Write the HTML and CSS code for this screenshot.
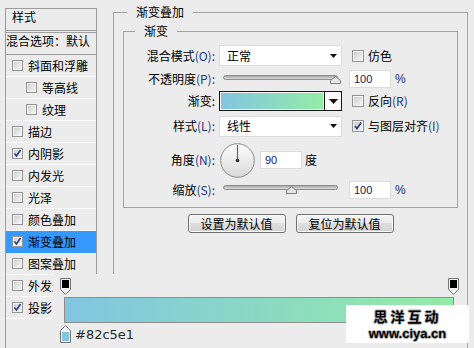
FILE: index.html
```html
<!DOCTYPE html>
<html lang="zh-CN">
<head>
<meta charset="utf-8">
<title>渐变叠加</title>
<link rel="stylesheet" href="styles.css">
</head>
<body>
<div class="page">
  <aside class="styles-list">
    <div class="list-head">样式</div>
    <div class="list-blend">混合选项：默认</div>
    <div class="item"><span class="cb"></span>斜面和浮雕</div>
    <div class="item sub"><span class="cb"></span>等高线</div>
    <div class="item sub"><span class="cb"></span>纹理</div>
    <div class="item"><span class="cb"></span>描边</div>
    <div class="item"><span class="cb checked"><svg width="9" height="9" viewBox="0 0 9 9"><path d="M1.5 4.5l2 2.5l4-6" fill="none" stroke="#2a3c8e" stroke-width="1.6"/></svg></span>内阴影</div>
    <div class="item"><span class="cb"></span>内发光</div>
    <div class="item"><span class="cb"></span>光泽</div>
    <div class="item"><span class="cb"></span>颜色叠加</div>
    <div class="item selected"><span class="cb checked"><svg width="9" height="9" viewBox="0 0 9 9"><path d="M1.5 4.5l2 2.5l4-6" fill="none" stroke="#2a3c8e" stroke-width="1.6"/></svg></span>渐变叠加</div>
    <div class="item"><span class="cb"></span>图案叠加</div>
    <div class="item"><span class="cb"></span>外发光</div>
    <div class="item"><span class="cb checked"><svg width="9" height="9" viewBox="0 0 9 9"><path d="M1.5 4.5l2 2.5l4-6" fill="none" stroke="#2a3c8e" stroke-width="1.6"/></svg></span>投影</div>
  </aside>

  <main class="group outer">
    <div class="group-title outer-title">渐变叠加</div>
    <section class="group inner">
      <div class="group-title inner-title">渐变</div>

      <div class="row r1">
        <div class="lbl">混合模式<span class="key">(O):</span></div>
        <div class="ctrl select"><span>正常</span><svg width="7" height="4" viewBox="0 0 7 4"><path d="M0 0h7l-3.5 4z" fill="#111"/></svg></div>
        <div class="side"><label class="check"><span class="cbox"></span>仿色</label></div>
      </div>

      <div class="row r2">
        <div class="lbl">不透明度<span class="key">(P):</span></div>
        <div class="ctrl slider"><div class="track"></div><svg class="thumb" style="left:107px" width="11" height="8" viewBox="0 0 11 8"><path d="M0.5 7.5v-3l5-4l5 4v3z" fill="#e6e6e6" stroke="#7d7d7d"/></svg></div>
        <div class="side"><div class="num">100</div><span class="pct">%</span></div>
      </div>

      <div class="row r3">
        <div class="lbl">渐变:</div>
        <div class="ctrl gradpick"><div class="swatch"><div class="swatch-fill"></div></div><div class="gbtn"><svg width="9" height="5" viewBox="0 0 9 5"><path d="M0 0h9l-4.5 5z" fill="#111"/></svg></div></div>
        <div class="side"><label class="check"><span class="cbox"></span>反向<span class="key">(R)</span></label></div>
      </div>

      <div class="row r4">
        <div class="lbl">样式<span class="key">(L):</span></div>
        <div class="ctrl select"><span>线性</span><svg width="7" height="4" viewBox="0 0 7 4"><path d="M0 0h7l-3.5 4z" fill="#111"/></svg></div>
        <div class="side"><label class="check"><span class="cbox"><svg width="10" height="10" viewBox="0 0 10 10"><path d="M2 5l2 2.6l4.2-6" fill="none" stroke="#2a3c8e" stroke-width="1.7"/></svg></span>与图层对齐<span class="key">(I)</span></label></div>
      </div>

      <div class="row r5">
        <div class="lbl">角度<span class="key">(N):</span></div>
        <div class="ctrl angle">
          <svg class="dial" width="35" height="35" viewBox="0 0 35 35">
            <defs><linearGradient id="dg" x1="0" y1="0" x2="0" y2="1"><stop offset="0" stop-color="#fdfdfd"/><stop offset="1" stop-color="#d9d9d9"/></linearGradient></defs>
            <circle cx="17.5" cy="17.5" r="16.8" fill="url(#dg)" stroke="#8a8a8a"/>
            <line x1="17.5" y1="2" x2="17.5" y2="17.5" stroke="#666" stroke-width="1.2"/>
            <circle cx="17.5" cy="17.5" r="1.8" fill="#333"/>
          </svg>
          <div class="num">90</div><span class="deg">度</span>
        </div>
      </div>

      <div class="row r6">
        <div class="lbl">缩放<span class="key">(S):</span></div>
        <div class="ctrl slider"><div class="track"></div><svg class="thumb" style="left:63px" width="11" height="8" viewBox="0 0 11 8"><path d="M0.5 7.5v-3l5-4l5 4v3z" fill="#e6e6e6" stroke="#7d7d7d"/></svg></div>
        <div class="side"><div class="num">100</div><span class="pct">%</span></div>
      </div>
    </section>

    <div class="buttons">
      <button class="btn">设置为默认值</button>
      <button class="btn">复位为默认值</button>
    </div>
  </main>
</div>

<div class="grad-editor">
  <div class="stops">
    <svg width="11" height="17" viewBox="0 0 11 17"><path d="M0.5 0.5h10v11l-5 5l-5-5z" fill="#f2f2f2" stroke="#777"/><rect x="2" y="2" width="7" height="8" fill="#000"/></svg>
    <svg width="11" height="17" viewBox="0 0 11 17"><path d="M0.5 0.5h10v11l-5 5l-5-5z" fill="#f2f2f2" stroke="#777"/><rect x="2" y="2" width="7" height="8" fill="#000"/></svg>
  </div>
  <div class="bar"></div>
  <div class="color-stop">
    <svg width="11" height="18" viewBox="0 0 11 18"><path d="M5.5 0.5l5 5v12h-10v-12z" fill="#f2f2f2" stroke="#777"/><rect x="2" y="7" width="7" height="9" fill="#82c5e1"/></svg>
    <span class="hex">#82c5e1</span>
  </div>
</div>

<div class="watermark">
  <div class="wm-cn">思洋互动</div>
  <div class="wm-url">www.ciya.cn</div>
</div>
</body>
</html>
```

FILE: styles.css
```css
* { box-sizing: border-box; }
html, body { margin: 0; height: 100%; }
body {
  background: #ececec;
  font-family: "Noto Sans CJK SC", "Liberation Sans", sans-serif;
  font-size: 12px;
  color: #000;
  overflow: hidden;
  position: relative;
}
.page {
  display: flex;
  align-items: flex-start;
  padding-left: 5px;
}

/* left styles list */
.styles-list {
  width: 92px;
  height: 380px;
  margin-top: 8px;
  border: 1px solid #9c9c9c;
}
.list-head {
  height: 22px;
  line-height: 16px;
  padding-left: 6px;
  border-bottom: 1px solid #a0a0a0;
}
.list-blend {
  height: 23px;
  margin-top: 1px;
  line-height: 16px;
  border-top: 1px solid #a0a0a0;
  border-bottom: 1px solid #a0a0a0;
  white-space: nowrap;
  overflow: hidden;
}
.item {
  height: 22px;
  display: flex;
  align-items: center;
  padding-left: 6px;
  border-bottom: 1px solid #fbfbfb;
  white-space: nowrap;
  line-height: 16px;
}
.item.sub { padding-left: 20px; }
.item.selected { background: #3399ff; border-bottom-color: #3399ff; }
.cb {
  width: 11px;
  height: 11px;
  margin-right: 5px;
  border: 1px solid #949494;
  box-shadow: inset 0 0 0 1px #f3f3f3;
  background: linear-gradient(135deg, #cdcdcd, #f8f8f8);
  display: flex;
  align-items: center;
  justify-content: center;
}
.cb svg { display: block; }

/* group boxes */
.group { border: 1px solid #a4a4a4; }
.outer {
  margin-left: 16px;
  margin-top: 12px;
  width: 355px;
  height: 400px;
}
.group-title {
  width: max-content;
  margin-top: -9px;
  line-height: 16px;
  padding: 0 9px;
  background: #ececec;
}
.outer-title { margin-left: 13px; }
.inner {
  margin: 11px 9px 0;
  padding-bottom: 8px;
}
.inner-title { margin-left: 11px; }

/* form rows */
.row { display: flex; align-items: center; }
.r1 { height: 21px; margin-top: 6px; }
.r2 { height: 20px; margin-top: 3px; }
.r3 { height: 20px; margin-top: 2px; }
.r4 { height: 20px; margin-top: 5px; }
.r5 { height: 34px; margin-top: 7px; }
.r6 { height: 18px; margin-top: 4px; }
.lbl {
  width: 91px;
  text-align: right;
  line-height: 16px;
  white-space: nowrap;
}
.key { color: #1d3482; }
.ctrl { margin-left: 4px; width: 123px; flex: none; }
.side { margin-left: 7px; display: flex; align-items: center; }

.select {
  height: 21px;
  background: #fff;
  border: 1px solid #dcdcdc;
  display: flex;
  align-items: center;
  justify-content: space-between;
  padding: 0 4px 0 7px;
  line-height: 16px;
}
.select svg { display: block; }

.slider { position: relative; height: 10px; margin-top: 2px; }
.track {
  margin-left: 4px;
  width: 115px;
  height: 5px;
  border-radius: 3px;
  border: 1px solid #8d8d8d;
  background: linear-gradient(#a9a9a9, #dcdcdc);
}
.thumb { position: absolute; top: 1px; margin-left: 4px; display: block; }
.r6 .slider { margin-top: 0; }

.gradpick { display: flex; height: 20px; }
.swatch {
  flex: 1;
  border: 1px solid #161616;
  padding: 1px;
  background: #f4f4f4;
}
.swatch-fill { height: 100%; background: linear-gradient(90deg, #82c5e1, #93eca7); }
.gbtn {
  width: 17px;
  border: 1px solid #161616;
  border-left: none;
  background: #fafafa;
  display: flex;
  align-items: center;
  justify-content: center;
}
.gbtn svg { display: block; }

.check { display: flex; align-items: center; margin-left: 3px; line-height: 16px; white-space: nowrap; }
.cbox {
  width: 12px;
  height: 12px;
  margin-right: 4px;
  border: 1px solid #939393;
  box-shadow: inset 0 0 0 1px #f3f3f3;
  background: linear-gradient(135deg, #cbcbcb, #f8f8f8);
  display: flex;
  align-items: center;
  justify-content: center;
}
.cbox svg { display: block; }

.num {
  width: 42px;
  height: 18px;
  background: #fff;
  border: 1px solid #dcdcdc;
  padding-left: 4px;
  font-family: "Liberation Sans", sans-serif;
  font-size: 11px;
  line-height: 16px;
  color: #141460;
}
.pct {
  margin-left: 4px;
  font-family: "Liberation Sans", sans-serif;
  font-size: 12px;
  color: #1d2a6a;
}
.angle { display: flex; align-items: center; }
.dial { display: block; margin-left: 1px; flex: none; }
.angle .num { margin-left: 5px; }
.deg { margin-left: 3px; line-height: 16px; }

.buttons {
  display: flex;
  justify-content: center;
  gap: 10px;
  margin-top: 6px;
}
.btn {
  width: 98px;
  height: 19px;
  padding: 0;
  border: 1px solid #6f6f6f;
  border-radius: 3px;
  box-shadow: inset 0 0 0 1px #fbfbfb;
  background: linear-gradient(#f4f4f4, #ececec 45%, #dedede 50%, #d2d2d2);
  font-family: "Noto Sans CJK SC", sans-serif;
  font-size: 12px;
  line-height: 16px;
  color: #000;
}

/* gradient editor overlay */
.grad-editor {
  position: absolute;
  left: 53px;
  top: 274px;
  width: 409px;
  bottom: 0;
  background: #ececec;
  padding: 4px 0 0 7px;
}
.stops {
  width: 399px;
  display: flex;
  justify-content: space-between;
}
.stops svg { display: block; }
.bar {
  margin: 2px 0 0 4px;
  width: 390px;
  height: 26px;
  border: 1px solid #8e8e8e;
  background: linear-gradient(90deg, #82c5e1, #93eca7);
}
.color-stop {
  display: flex;
  align-items: flex-end;
  margin-top: 2px;
}
.color-stop svg { display: block; flex: none; }
.hex {
  margin-left: 4px;
  font-family: "DejaVu Sans", sans-serif;
  font-size: 13px;
  line-height: 16px;
  color: #2a2a2a;
}

/* watermark */
.watermark {
  position: absolute;
  left: 346px;
  top: 305px;
  width: 123px;
  height: 38px;
  background: #fff;
  display: flex;
  flex-direction: column;
  align-items: center;
  padding-top: 3px;
  gap: 4px;
}
.wm-cn {
  font-family: "Noto Sans CJK SC", sans-serif;
  font-weight: bold;
  font-size: 14px;
  line-height: 16px;
  letter-spacing: 3px;
  text-shadow: -1px 0 #b0b0b0, 1px 0 #b0b0b0, 0 -1px #b0b0b0, 0 1px #b0b0b0;
}
.wm-url {
  font-family: "Liberation Sans", sans-serif;
  font-weight: bold;
  font-size: 13px;
  line-height: 12px;
  text-shadow: -1px 0 #b0b0b0, 1px 0 #b0b0b0, 0 -1px #b0b0b0, 0 1px #b0b0b0;
}
```
